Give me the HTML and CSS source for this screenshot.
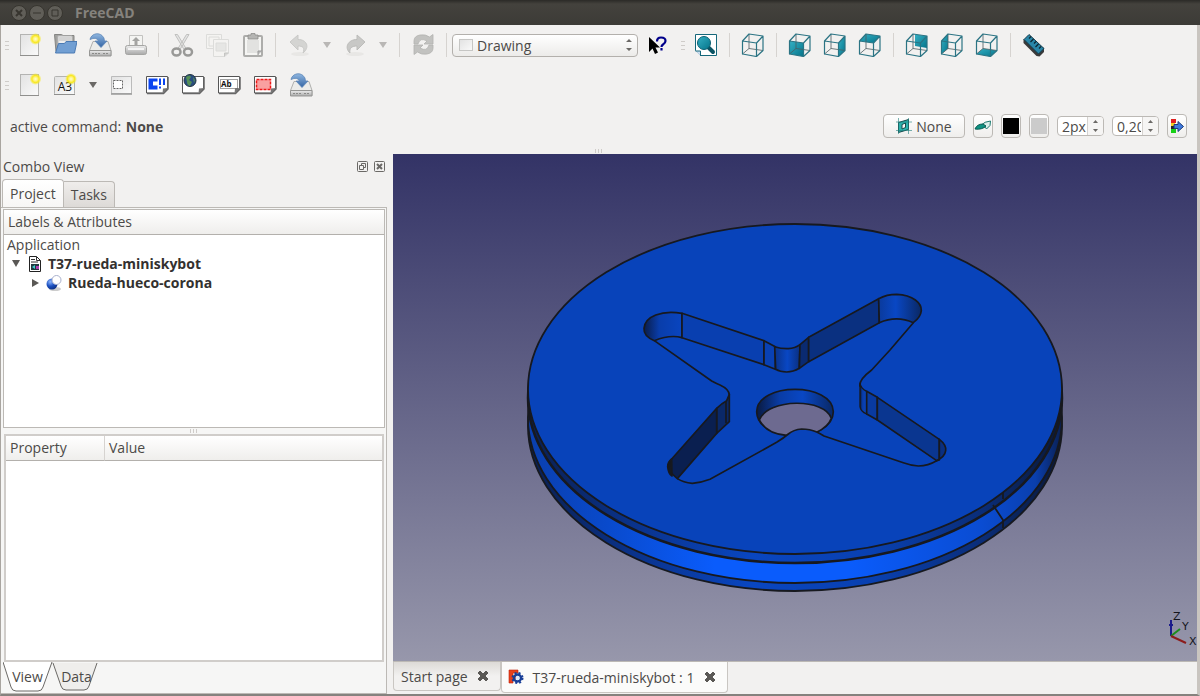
FILE: index.html
```
<!DOCTYPE html>
<html lang="en">

<head>
  <meta charset="UTF-8">
  <meta name="viewport" content="width=device-width, initial-scale=1.0">
  <title>FreeCAD</title>
  <link rel="stylesheet" href="styles.css">
</head>

<body>
  <!-- shared shapes -->
  <svg class="defs" width="0" height="0" aria-hidden="true">
    <defs>
      <linearGradient id="paper" x1="0" y1="0" x2="1" y2="1">
        <stop offset="0" stop-color="#e2e2e2" />
        <stop offset="1" stop-color="#fafafa" />
      </linearGradient>
      <linearGradient id="metal" x1="0" y1="0" x2="0" y2="1">
        <stop offset="0" stop-color="#eeeeee" />
        <stop offset="1" stop-color="#a8a8a8" />
      </linearGradient>
      <linearGradient id="blue" x1="0" y1="0" x2="0" y2="1">
        <stop offset="0" stop-color="#8fb6e0" />
        <stop offset="1" stop-color="#3465a4" />
      </linearGradient>
      <linearGradient id="teal" x1="0" y1="0" x2="1" y2="1">
        <stop offset="0" stop-color="#35b0c4" />
        <stop offset="1" stop-color="#04748a" />
      </linearGradient>
      <radialGradient id="glow">
        <stop offset="0" stop-color="#ffffd0" />
        <stop offset=".35" stop-color="#fff27a" />
        <stop offset=".6" stop-color="#f8e820" />
        <stop offset="1" stop-color="#f8e820" stop-opacity="0" />
      </radialGradient>
      <radialGradient id="ball" cx=".35" cy=".3" r=".8">
        <stop offset="0" stop-color="#8fb8ff" />
        <stop offset=".5" stop-color="#1c50c0" />
        <stop offset="1" stop-color="#0a2a78" />
      </radialGradient>
      <g id="new-file">
        <rect x="2.500" y="1.500" width="18" height="21" fill="url(#paper)" stroke="#b4b4b2" />
        <path d="M2 22.500h19" stroke="#8f8f8d" />
        <circle cx="17.500" cy="6" r="6" fill="url(#glow)" />
      </g>
      <g id="save">
        <path d="M5 8.500h15l3 9v5H1.500v-5z" fill="#ececea" stroke="#b0b0ae" />
        <path d="M1.500 17.500h21.500v5.500H1.500z" fill="url(#metal)" stroke="#979795" />
        <path d="M4 20.500h8M15 20.500h5" stroke="#8a8a88" stroke-dasharray="2 1" />
        <path d="M2 6.500C3 1 10-1 14 2.500q2.500 2 2.500 5.500H19l-6 6.500L7 8h3.500Q8.500 3.500 2 6.500z" fill="url(#blue)" stroke="#5d86b8" stroke-width=".8" />
      </g>
      <g id="cube" fill="none" stroke="#2b7484" stroke-width="1.200" stroke-linejoin="round">
        <path d="M8 1v14.500M8 15.500l14 2M8 15.500L1.500 21" stroke="#4c5c60" stroke-width=".8" />
        <path d="M1.500 8L8 1l14 2v14.500l-6.500 6L1.500 21zM1.500 8l14 2L22 3M15.500 10v13.500" />
      </g>
      <g id="sheet">
        <path d="M1.500 3.500h21v12l-5 4.500h-16z" fill="#fff" stroke="#555" stroke-linejoin="round" />
        <path d="M2 20.500h16.500l4.500-4.500V4" fill="none" stroke="#666" stroke-width="1.500" />
        <path d="M17.500 20.500l.5-5 5-.5z" fill="#777" />
      </g>
      <g id="cross">
        <path d="M2 4l2-2 3 3 3-3 2 2-3 3 3 3-2 2-3-3-3 3-2-2 3-3z" fill="#5a5855" stroke="#5a5855" stroke-linejoin="round" />
      </g>
    </defs>
  </svg>

  <div class="window">
    <header class="titlebar">
      <button class="wm" aria-label="Close"><svg width="16" height="16"><circle cx="8" cy="8" r="7.500" /><path d="M5 5l6 6M11 5l-6 6" stroke-width="2" /></svg></button>
      <button class="wm" aria-label="Minimize"><svg width="16" height="16"><circle cx="8" cy="8" r="7.500" /><path d="M4 8h8" /></svg></button>
      <button class="wm" aria-label="Maximize"><svg width="16" height="16"><circle cx="8" cy="8" r="7.500" /><path d="M5 5h6v6H5z" /></svg></button>
      <h1>FreeCAD</h1>
    </header>

    <nav class="toolbar" aria-label="Standard">
      <span class="grip"></span>
      <button class="tool" aria-label="New"><svg viewBox="0 0 24 24"><use href="#new-file" /></svg></button>
      <button class="tool" aria-label="Open">
        <svg viewBox="0 0 24 24">
          <path d="M1.500 1.500h7l1.500 1h11v16H3z" fill="#a2a2a0" stroke="#858583" />
          <path d="M5 3h14v9H5z" fill="#eee" stroke="#bbb" />
          <path d="M6 5h12M6 7h12" stroke="#aaa" stroke-width=".8" />
          <path d="M5.500 10.500h6l1.500-2h11L21.500 20H2.500z" fill="#729fd3" stroke="#4b7ab3" stroke-linejoin="round" />
        </svg>
      </button>
      <button class="tool" aria-label="Save"><svg viewBox="0 0 24 24"><use href="#save" /></svg></button>
      <button class="tool" aria-label="Print">
        <svg viewBox="0 0 24 24">
          <path d="M6.500 2.500h13V13h-13z" fill="#f4f4f2" stroke="#c2c2c0" />
          <path d="M13 4l4 4h-2.500v4h-3V8H9z" fill="#a4a4a2" />
          <rect x="2.500" y="12.500" width="21" height="9" rx="2" fill="url(#metal)" stroke="#a5a5a3" />
          <path d="M5 16h16" stroke="#f4f4f4" stroke-width="2" />
        </svg>
      </button>
      <span class="sep"></span>
      <button class="tool" aria-label="Cut">
        <svg viewBox="0 0 24 24" fill="none">
          <path d="M5 1.500l2.500 0 8.500 14-2 1zM19 1.500l-2.500 0-8.500 14 2 1z" fill="#e4e4e4" stroke="#c0c0be" />
          <ellipse cx="6.500" cy="19" rx="4" ry="3.500" stroke="#999997" stroke-width="2.500" />
          <ellipse cx="18" cy="19" rx="4" ry="3.500" stroke="#999997" stroke-width="2.500" />
        </svg>
      </button>
      <button class="tool" aria-label="Copy">
        <svg viewBox="0 0 24 24" fill="#f4f3f1" stroke="#dcdcda">
          <path d="M1.500 1.500h15v14h-15zM4 4h10v9H4z" />
          <path d="M8.500 6.500h15V20L20 23.500H8.500z" />
          <path d="M11 10h10v8H11z" fill="#e6e6e4" />
          <path d="M19.500 23.500V20h4" fill="#d4d4d2" stroke="#c4c4c2" />
        </svg>
      </button>
      <button class="tool" aria-label="Paste">
        <svg viewBox="0 0 24 24">
          <rect x="4" y="3" width="18" height="20" rx="1" fill="#f5f5f3" stroke="#adadab" stroke-width="2" />
          <path d="M7 7h12v13H7z" fill="#e2e2e0" />
          <path d="M8 2h3V.500h4V2h3v4H8z" fill="#b5b5b3" stroke="#8e8e8c" stroke-width=".8" />
          <path d="M18 22v-4h4" fill="#bbb" stroke="#999" />
        </svg>
      </button>
      <span class="sep"></span>
      <button class="tool" aria-label="Undo">
        <svg viewBox="0 0 24 24"><ellipse cx="13" cy="21" rx="9" ry="2" fill="#e8e7e5" /><path d="M3 9l8-7v4.500c9 0 12 8 5 13.500 2-5 0-7-5-7V17z" fill="#d4d4d2" stroke="#c9c9c7" /></svg>
      </button>
      <button class="drop" aria-label="Undo history"><svg viewBox="0 0 8 6"><path d="M0 0h8L4 6z" fill="#b9b7b5" /></svg></button>
      <button class="tool" aria-label="Redo">
        <svg viewBox="0 0 24 24"><ellipse cx="12" cy="21" rx="9" ry="2" fill="#e8e7e5" /><path d="M22 9l-8-7v4.500c-9 0-13 8-7 13.500-1-5 2-7 7-7V17z" fill="#c8c8c6" stroke="#bcbcba" /></svg>
      </button>
      <button class="drop" aria-label="Redo history"><svg viewBox="0 0 8 6"><path d="M0 0h8L4 6z" fill="#b9b7b5" /></svg></button>
      <span class="sep"></span>
      <button class="tool" aria-label="Refresh">
        <svg viewBox="0 0 24 24" fill="#c2c2c0" stroke="#b2b2b0" stroke-width=".8">
          <path d="M3 11V8q0-5 6-6 5.500-1 9.500 2L22 1.500V11h-9l3-3Q9 4 7 11z" />
          <path d="M22 12v3q0 5-6 6-5.500 1-9.500-2L3 21.500V12h9l-3 3q7 4 9-3z" />
        </svg>
      </button>
      <span class="sep"></span>
      <div class="workbench">
        <svg width="14" height="12"><rect x=".5" y=".5" width="13" height="11" fill="url(#paper)" stroke="#c6c6c4" /></svg>
        <select aria-label="Workbench">
          <option>Drawing</option>
        </select>
        <svg width="6" height="12" fill="#6b6966"><path d="M0 3l3-3 3 3zM0 9l3 3 3-3z" /></svg>
      </div>
      <button class="tool" aria-label="What's this">
        <svg viewBox="0 0 24 24">
          <path d="M5 4v15l3.500-3.500L11 21l3-1.500-2.500-5H16z" fill="#000" />
          <path d="M13 8.500q0-4 4-4 4.500 0 4.500 3.500 0 2-2.500 3.500-1.500 1-1.500 2.500M17.500 15v2.500" fill="none" stroke="#00008b" stroke-width="2.200" />
        </svg>
      </button>
      <span class="grip inner"></span>
      <button class="tool" aria-label="Fit all">
        <svg viewBox="0 0 24 24">
          <path d="M2 1.500h20.500v21H6.500l-5-5V1.500z" fill="#fff" stroke="#15677a" />
          <path d="M1.500 18h5v5" fill="#cde" stroke="#15677a" />
          <path d="M13 13l6 6" stroke="#0b5363" stroke-width="4" stroke-linecap="round" />
          <circle cx="10" cy="10" r="6.500" fill="url(#teal)" stroke="#0b6072" />
        </svg>
      </button>
      <span class="sep"></span>
      <button class="tool" aria-label="Axonometric"><svg viewBox="0 0 24 24"><use href="#cube" /></svg></button>
      <span class="sep"></span>
      <button class="tool" aria-label="Front"><svg viewBox="0 0 24 24"><path d="M1.500 8l14 2v13.500L1.500 21z" fill="url(#teal)" /><use href="#cube" /></svg></button>
      <button class="tool" aria-label="Right"><svg viewBox="0 0 24 24"><path d="M15.500 10L22 3v14.500l-6.500 6z" fill="url(#teal)" /><use href="#cube" /></svg></button>
      <button class="tool" aria-label="Top"><svg viewBox="0 0 24 24"><path d="M1.500 8L8 1l14 2-6.500 7z" fill="url(#teal)" /><use href="#cube" /></svg></button>
      <span class="sep"></span>
      <button class="tool" aria-label="Rear"><svg viewBox="0 0 24 24"><path d="M10 1.500L22 3v12l-12-2z" fill="url(#teal)" /><use href="#cube" /></svg></button>
      <button class="tool" aria-label="Left"><svg viewBox="0 0 24 24"><path d="M1.500 8L8 1v14.500L1.500 21z" fill="url(#teal)" /><use href="#cube" /></svg></button>
      <button class="tool" aria-label="Bottom"><svg viewBox="0 0 24 24"><path d="M1.500 21L8 15.500l14 2-6.500 6z" fill="url(#teal)" /><use href="#cube" /></svg></button>
      <span class="sep"></span>
      <button class="tool" aria-label="Measure">
        <svg viewBox="0 0 24 24">
          <path d="M1.500 6v4l13 13 3 .5 4.500-4.500v-4z" fill="#3a3a3a" />
          <path d="M2 6.500L7 1.500l15 14-5.500 5.500z" fill="#2a86a8" stroke="#163c4c" stroke-linejoin="round" />
          <path d="M9 3.500l-2 2M11.500 6l-3 3M14 8.500l-2 2M16.500 11l-3 3M19 13.500l-2 2" stroke="#0c2630" stroke-width="1.200" />
        </svg>
      </button>
    </nav>

    <nav class="toolbar" aria-label="Drawing">
      <span class="grip"></span>
      <button class="tool" aria-label="New drawing"><svg viewBox="0 0 24 24"><use href="#new-file" /></svg></button>
      <button class="tool" aria-label="New A3 page">
        <svg viewBox="0 0 24 24">
          <rect x="1.500" y="3.500" width="20" height="18" rx="1" fill="url(#paper)" stroke="#b4b4b2" />
          <path d="M1 21.500h21" stroke="#8f8f8d" />
          <text x="12" y="18" text-anchor="middle" class="icon-a3">A3</text>
          <circle cx="18" cy="6" r="6" fill="url(#glow)" />
        </svg>
      </button>
      <button class="drop" aria-label="Page sizes"><svg viewBox="0 0 8 6"><path d="M0 0h8L4 6z" fill="#6b6966" /></svg></button>
      <div class="tool-group">
        <button class="tool" aria-label="Insert view">
          <svg viewBox="0 0 24 24">
            <path d="M2.500 3.500h20v17h-20z" fill="url(#paper)" stroke="#bbb" />
            <path d="M2 21h21" stroke="#999" stroke-width="1.500" />
            <path d="M4.500 7.500h9v8h-9z" fill="#fff" stroke="#666" stroke-dasharray="2 1" />
          </svg>
        </button>
        <button class="tool" aria-label="Ortho views">
          <svg viewBox="0 0 24 24"><use href="#sheet" />
            <path d="M3.500 5.500h9v3H8v4h4.500v4h-9zM14 5.500h2V12h-2zM18 5.500h2V12h-2zM14 13.500h2v2h-2z" fill="#0a44f0" />
          </svg>
        </button>
        <button class="tool" aria-label="Open browser view">
          <svg viewBox="0 0 24 24"><use href="#sheet" />
            <circle cx="9" cy="7.500" r="6" fill="#294d80" stroke="#22343d" />
            <path d="M5 4q4-3 5 0l-2 3 3 2-2 4q-3-1-3-4zM12 4l2 3-1 3z" fill="#559056" />
          </svg>
        </button>
        <button class="tool" aria-label="Annotation">
          <svg viewBox="0 0 24 24"><use href="#sheet" />
            <path d="M3.500 6.500h17v9h-17z" fill="none" stroke="#444" stroke-dasharray="1 1" />
            <text x="4" y="14" class="icon-ab">Ab</text>
          </svg>
        </button>
        <button class="tool" aria-label="Clip">
          <svg viewBox="0 0 24 24"><use href="#sheet" />
            <path d="M3.500 6.500h14v10h-14z" fill="#f9a0a0" stroke="#ee1818" stroke-width="1.500" stroke-dasharray="3 1" />
          </svg>
        </button>
        <button class="tool" aria-label="Export page"><svg viewBox="0 0 24 24"><use href="#save" /></svg></button>
      </div>
    </nav>

    <div class="toolbar draft">
      <p>active command: <strong>None</strong></p>
      <div class="draft-controls">
        <button class="box plane">
          <svg width="16" height="16" viewBox="0 0 16 16">
            <path d="M2.500 4.500l10-3v10l-10 3zM6 6.500v4.500l3.500-1.500V5z" fill="#2cb3ad" fill-rule="evenodd" stroke="#17494a" />
            <path d="M0 4h16M0 12.500h16M2.500 0v16M12.500 0v16" stroke="#207d7a" stroke-width=".6" />
          </svg>
          None
        </button>
        <button class="box" aria-label="Construction mode">
          <svg width="18" height="14" viewBox="0 0 18 14">
            <path d="M6 7q5-5 10.500-5 1 5-4 8-1-3-4-2z" fill="#d9eeea" stroke="#1e7b71" />
            <path d="M1 10q2-5 8-5l3 2q-4 4-11 3z" fill="#0d9383" stroke="#0b5c53" />
          </svg>
        </button>
        <button class="box" aria-label="Line color"><span class="swatch black"></span></button>
        <button class="box" aria-label="Face color"><span class="swatch grey"></span></button>
        <div class="spin">
          <input type="text" value="2px" aria-label="Line width">
          <div class="arrows">
            <button aria-label="Increase line width"><svg width="5" height="3"><path d="M0 3l2.500-3L5 3z" /></svg></button>
            <button aria-label="Decrease line width"><svg width="5" height="3"><path d="M0 0l2.500 3L5 0z" /></svg></button>
          </div>
        </div>
        <div class="spin">
          <input type="text" value="0,20" aria-label="Font size">
          <div class="arrows">
            <button aria-label="Increase font size"><svg width="5" height="3"><path d="M0 3l2.500-3L5 3z" /></svg></button>
            <button aria-label="Decrease font size"><svg width="5" height="3"><path d="M0 0l2.500 3L5 0z" /></svg></button>
          </div>
        </div>
        <button class="box" aria-label="Apply to selected">
          <svg width="14" height="16" viewBox="0 0 14 16">
            <path d="M1 1h5v4H1z" fill="#e02020" /><path d="M1 5h4v3H1z" fill="#f5d020" /><path d="M1 8h4v3H1z" fill="#222" /><path d="M1 11h5v4H1z" fill="#18d018" />
            <path d="M4 6.500h4v-3l5.500 5L8 13.500v-3H4z" fill="#3f7ade" stroke="#1c3b78" />
          </svg>
        </button>
      </div>
    </div>
    <div class="hgrip"><span></span></div>

    <main class="main">
      <aside class="combo">
        <div class="dock-title">
          <h2>Combo View</h2>
          <button aria-label="Float"><svg width="11" height="11"><rect x=".5" y=".5" width="10" height="10" rx="1" /><path d="M4.500 4.500v-2h4v4h-2M2.500 4.500h4v4h-4z" /></svg></button>
          <button aria-label="Close panel"><svg width="11" height="11"><rect x=".5" y=".5" width="10" height="10" rx="1" /><path d="M3 3l5 5M8 3l-5 5" stroke-width="2" /></svg></button>
        </div>
        <div class="tabs">
          <button class="tab active">Project</button>
          <button class="tab">Tasks</button>
        </div>
        <div class="pane">
          <section class="frame tree">
            <h3>Labels &amp; Attributes</h3>
            <ul>
              <li>Application</li>
              <li class="doc">
                <svg width="8" height="8"><path d="M0 0h8L4 7z" fill="#5a5855" /></svg>
                <svg class="doc-icon" width="12" height="16">
                  <path d="M.5.500h7l4 4v11H.5z" fill="#fff" stroke="#222" />
                  <path d="M7.500.500v4h4M2 3.500h4M2 6h7" fill="none" stroke="#333" />
                  <path d="M2 8h8v6H2z" fill="#223a40" /><path d="M3 11l3-2v4z" fill="#40d0d0" /><path d="M7 10h3v3H7z" fill="#b040b0" />
                </svg>
                <strong>T37-rueda-miniskybot</strong>
              </li>
              <li class="part">
                <svg width="7" height="8"><path d="M0 0l7 4-7 4z" fill="#5a5855" /></svg>
                <svg class="part-icon" width="16" height="16">
                  <ellipse cx="9" cy="14" rx="6" ry="2" fill="#ccc" />
                  <circle cx="6" cy="9" r="5.500" fill="url(#ball)" />
                  <circle cx="10.500" cy="5" r="4.500" fill="#fff" stroke="#a9b0cc" />
                </svg>
                <strong>Rueda-hueco-corona</strong>
              </li>
            </ul>
          </section>
          <div class="vgrip"><span></span></div>
          <section class="frame props">
            <table>
              <thead>
                <tr>
                  <th class="name">Property</th>
                  <th>Value</th>
                </tr>
              </thead>
            </table>
          </section>
          <div class="sheet-tabs">
            <button class="sheet-tab"><svg viewBox="0 0 50 30"><path d="M0 0l8 25q1 4 5 4h22q4 0 5-4L49 0" fill="#fff" stroke="#6b6966" /></svg><span>View</span></button>
            <button class="sheet-tab"><svg viewBox="0 0 50 30"><path d="M1 1l8 23q1 4 5 4h18q4 0 5-4l8-23" fill="#efeeec" stroke="#6b6966" /></svg><span>Data</span></button>
          </div>
        </div>
      </aside>

      <section class="mdi">
        <div class="view3d">
          <svg class="wheel" viewBox="393 154 804 507" role="img" aria-label="Wheel">
            <defs>
              <linearGradient id="rim" x1="0" x2="1">
                <stop offset="0" stop-color="#0a1f50" />
                <stop offset=".2" stop-color="#0a338c" />
                <stop offset=".42" stop-color="#0946c0" />
                <stop offset=".65" stop-color="#0940b0" />
                <stop offset=".85" stop-color="#0a2d78" />
                <stop offset="1" stop-color="#0a1838" />
              </linearGradient>
              <linearGradient id="groove" x1="0" x2="1">
                <stop offset="0" stop-color="#0a3fae" />
                <stop offset=".15" stop-color="#094acc" />
                <stop offset=".35" stop-color="#0a5cfc" />
                <stop offset=".6" stop-color="#0a5cfc" />
                <stop offset=".85" stop-color="#0a4cd2" />
                <stop offset=".95" stop-color="#0a3fae" />
                <stop offset="1" stop-color="#0a1f50" />
              </linearGradient>
              <linearGradient id="wall-l" x1="0" x2="1">
                <stop offset="0" stop-color="#0a1c48" />
                <stop offset=".4" stop-color="#093daa" />
                <stop offset="1" stop-color="#0945c0" />
              </linearGradient>
              <linearGradient id="wall-c" x1="0" x2="1">
                <stop offset="0" stop-color="#0a3288" />
                <stop offset=".5" stop-color="#0947c4" />
                <stop offset="1" stop-color="#0a2f80" />
              </linearGradient>
              <linearGradient id="wall-r" x1="0" x2="1">
                <stop offset="0" stop-color="#0a3a9c" />
                <stop offset=".4" stop-color="#0947c4" />
                <stop offset="1" stop-color="#0a2864" />
              </linearGradient>
              <linearGradient id="wall-h" x1="0" x2="1">
                <stop offset="0" stop-color="#0a1a40" />
                <stop offset=".3" stop-color="#093ca6" />
                <stop offset=".6" stop-color="#0947c4" />
                <stop offset="1" stop-color="#0a2864" />
              </linearGradient>
            </defs>
            <g stroke="#17191f" stroke-width="1.800">
              <ellipse cx="795" cy="426" rx="267" ry="165" fill="url(#rim)" />
              <ellipse cx="795" cy="418" rx="267" ry="165" fill="url(#groove)" />
              <ellipse cx="795" cy="398" rx="267" ry="165" fill="url(#rim)" stroke-width="2.500" />
              <ellipse cx="795" cy="389" rx="267" ry="165" fill="#0843ba" />
              <path d="M1003 492v7M993 505l10 15v8" fill="none" />
            </g>
            <!-- star pocket -->
            <svg x="620" y="280" width="340" height="220" viewBox="0 0 1020 660">
              <g stroke="#17191f" stroke-width="5" stroke-linejoin="round">
                <path d="M410 395C412 306 638 306 640 395C638 490 412 490 410 395z" fill="url(#wall-h)" />
                <path d="M418 420C445 354 615 354 634 415Q625 440 590 457Q545 475 500 466Q440 462 418 420z" fill="#6d6a90" />
                <path d="M490 476L505 462Q520 449 545 447Q570 447 590 456L612 468V480H490z" fill="#0843ba" stroke="none" />
                <path d="M72 145C75 108 125 90 186 100V173Q150 163 103 182Q70 168 72 145z" fill="url(#wall-l)" />
                <path d="M186 100L432 182V254L186 173z" fill="#093fb0" />
                <path d="M432 182L466 200V268L432 254z" fill="#0941b4" />
                <path d="M464 200Q485 207 505 206Q525 205 540 194L538 265Q520 276 500 276Q480 276 467 268z" fill="url(#wall-c)" />
                <path d="M540 194L566 172V245L538 265z" fill="#0a2a70" />
                <path d="M566 172L776 56L778 128L566 245z" fill="#0a3080" />
                <path d="M776 56Q800 43 830 43C880 45 905 70 904 92Q902 112 880 128Q830 105 778 128z" fill="url(#wall-r)" />
                <path d="M720 310Q722 325 740 334V402Q722 395 720 380z" fill="url(#wall-l)" stroke-width="4" />
                <path d="M740 334L772 352V420L740 402z" fill="#093aa0" />
                <path d="M772 352L958 478V540L950 542L772 420z" fill="#0a3690" />
                <path d="M958 478Q980 495 977 512Q975 530 950 542L958 538z" fill="#0a2f80" />
                <path d="M328 343V425L290 460V385Q305 370 320 362z" fill="#0a2868" />
                <path d="M318 364V430" fill="none" />
                <path d="M290 385L155 537Q130 562 172 596L290 460z" fill="#0a1f50" />
                <path d="M155 537Q142 548 143 560Q145 582 156 588z" fill="#17191f" />
                <path d="M103 182L275 303Q290 311 300 315Q328 328 328 345M880 128L810 210L755 270Q715 300 720 320M950 542Q925 557 895 558Q875 557 850 548L612 468Q600 460 590 456Q570 447 545 447Q520 449 505 462Q490 475 470 487L270 598Q245 608 217 610Q190 608 172 596" fill="none" />
              </g>
            </svg>
            <g class="axes" fill="none" stroke-width="2">
              <path d="M1171 636v-16M1169 625h4" stroke="#1c1c8c" />
              <path d="M1171 636l9-7" stroke="#1c8c1c" />
              <path d="M1171 636l15 7" stroke="#8c1c1c" />
              <text x="1173" y="620">Z</text>
              <text x="1182" y="630">Y</text>
              <text x="1189" y="645">X</text>
            </g>
          </svg>
        </div>
        <div class="doc-tabs">
          <div class="doc-tab">
            <button>Start page</button>
            <button aria-label="Close Start page"><svg width="14" height="14"><use href="#cross" /></svg></button>
          </div>
          <div class="doc-tab active">
            <svg width="16" height="16">
              <path d="M1 1h9v3H5v3h3v3H5v4H1z" fill="#e8401c" stroke="#c02008" stroke-width=".6" />
              <circle cx="9.500" cy="9" r="3.500" fill="none" stroke="#193f98" stroke-width="2.500" />
              <circle cx="9.500" cy="9" r="5" fill="none" stroke="#193f98" stroke-width="2" stroke-dasharray="2 2" />
              <circle cx="9.500" cy="9" r="2" fill="#dfe8fa" />
            </svg>
            <button>T37-rueda-miniskybot : 1</button>
            <button aria-label="Close T37-rueda-miniskybot"><svg width="14" height="14"><use href="#cross" /></svg></button>
          </div>
        </div>
      </section>
    </main>
  </div>
</body>

</html>
```

FILE: styles.css
```
* {
  margin: 0;
  padding: 0;
  box-sizing: border-box;
}

html,
body {
  width: 100%;
  height: 100%;
}

body {
  background: #85827e;
  color: #4c4a48;
  font: 14px/19px "Open Sans", "Noto Sans", sans-serif;
  overflow: hidden;
}

button,
input,
select {
  border: 0;
  background: none;
  color: inherit;
  font: inherit;
}

svg {
  display: block;
  flex: none;
}

.defs {
  position: absolute;
}

.window {
  display: flex;
  flex-direction: column;
  height: 100vh;
  background: #f2f1f0;
  border-left: 1px solid #a9a5a0;
  border-right: 3px solid #c9c5c0;
  border-bottom: 2px solid #85827e;
}

/* title bar */
.titlebar {
  display: flex;
  align-items: center;
  gap: 2px;
  height: 25px;
  padding-left: 11px;
  margin: 0 -3px 0 -1px;
  background: linear-gradient(#2b2a27, #44423d 4px, #3c3b37);
  color: #85827d;
}

.titlebar h1 {
  margin-left: 10px;
  font-size: 14px;
}

.wm svg {
  fill: #605e58;
  stroke: #37352f;
}

/* tool bars */
.toolbar {
  display: flex;
  align-items: center;
  height: 40px;
}

.tool {
  display: flex;
  justify-content: center;
  width: 35px;
}

.tool svg {
  width: 24px;
  height: 24px;
}

.tool-group {
  display: flex;
  gap: 1px;
}

.drop {
  display: flex;
  justify-content: center;
  width: 21px;
}

.drop svg {
  width: 8px;
  height: 6px;
}

.grip {
  width: 11px;
  height: 9px;
  border-left: 4px solid #f2f1f0;
  border-right: 3px solid #f2f1f0;
  background: repeating-linear-gradient(#cfccc9 0 1px, #f2f1f0 1px 4px);
}

.grip.inner {
  width: 15px;
  border-left-width: 8px;
}

.sep {
  width: 12px;
  height: 24px;
  background: linear-gradient(#d6d3d0, #d6d3d0) center / 1px 100% no-repeat;
}

.workbench {
  display: flex;
  align-items: center;
  gap: 4px;
  width: 186px;
  height: 23px;
  padding: 0 5px 0 6px;
  border: 1px solid #b3b0ac;
  border-radius: 4px;
  background: linear-gradient(#fff, #ecebe9);
}

.workbench select {
  flex: 1;
  appearance: none;
}

.icon-a3 {
  font: 12px "Open Sans", sans-serif;
  fill: #111;
}

.icon-ab {
  font: bold 8px "Open Sans", sans-serif;
  fill: #111;
}

/* draft bar */
.draft {
  justify-content: space-between;
  height: 42px;
  padding: 0 10px 0 9px;
}

.draft strong {
  margin-left: 1px;
}

.draft-controls {
  display: flex;
  align-items: center;
  gap: 8px;
}

.box {
  display: flex;
  align-items: center;
  justify-content: center;
  width: 20px;
  height: 24px;
  border: 1px solid #bcb9b5;
  border-radius: 4px;
  background: linear-gradient(#fff, #efeeec);
}

.box.plane {
  gap: 4px;
  width: 82px;
}

.swatch {
  width: 16px;
  height: 16px;
}

.swatch.black {
  background: #000;
}

.swatch.grey {
  background: #cbcbcb;
}

.spin {
  display: flex;
  width: 47px;
  height: 20px;
  border: 1px solid #bcb9b5;
  border-radius: 4px;
  background: #fff;
  overflow: hidden;
}

.spin input {
  width: 28px;
  padding-left: 4px;
}

.arrows {
  display: flex;
  flex: 1;
  flex-direction: column;
  border-left: 1px solid #d5d2cf;
  margin-left: 1px;
  background: #f6f5f4;
}

.arrows button {
  display: flex;
  flex: 1;
  align-items: center;
  justify-content: center;
  fill: #6b6966;
}

.hgrip {
  display: flex;
  align-items: flex-end;
  justify-content: center;
  height: 7px;
  padding-bottom: 1px;
}

.hgrip span,
.vgrip span {
  width: 8px;
  height: 4px;
  background: repeating-linear-gradient(90deg, #cfccc9 0 1px, transparent 1px 3px);
}

/* dock */
.main {
  display: flex;
  flex: 1;
  min-height: 0;
}

.combo {
  display: flex;
  flex-direction: column;
  width: 392px;
  padding-right: 6px;
}

.dock-title {
  display: flex;
  align-items: center;
  gap: 6px;
  height: 25px;
  padding: 0 2px;
}

.dock-title h2 {
  flex: 1;
  font-size: 14px;
  font-weight: normal;
}

.dock-title svg {
  fill: none;
  stroke: #6b6966;
}

.tabs {
  display: flex;
  align-items: flex-end;
  height: 28px;
  padding-left: 1px;
}

.tab {
  height: 26px;
  padding: 0 7px;
  border: 1px solid #bcb9b5;
  border-left: 0;
  border-bottom: 0;
  border-radius: 0 4px 0 0;
  background: linear-gradient(#efedeb, #dddad7);
}

.tab.active {
  height: 28px;
  border-left: 1px solid #bcb9b5;
  border-radius: 4px 4px 0 0;
  background: linear-gradient(#fff, #f7f6f5);
}

.pane {
  display: flex;
  flex: 1;
  flex-direction: column;
  min-height: 0;
  padding: 1px 1px 0 2px;
  border-top: 1px solid #bcb9b5;
  border-right: 1px solid #bcb9b5;
  border-bottom: 1px solid #bcb9b5;
  background: #f6f6f5;
}

.frame {
  min-height: 0;
  border: 1px solid #bcb9b5;
  background: #fff;
}

.tree {
  flex: 220;
}

.props {
  flex: 227;
  margin: 0 1px;
  border-width: 2px;
  border-color: #d0cdca;
}

.frame h3,
.frame th {
  height: 25px;
  padding-left: 4px;
  border-bottom: 1px solid #b3b0ac;
  background: linear-gradient(#fff, #efeeec);
  font-size: 14px;
  font-weight: normal;
  line-height: 24px;
  text-align: left;
}

.frame ul {
  list-style: none;
}

.frame li {
  display: flex;
  align-items: center;
  height: 19px;
  padding-left: 3px;
}

.frame li strong {
  color: #33312f;
}

.frame li.doc {
  padding-left: 8px;
}

.frame li.part {
  padding-left: 28px;
}

.doc-icon {
  margin: 0 7px 0 9px;
}

.part-icon {
  margin: 0 6px 0 7px;
}

.frame table {
  width: 100%;
  border-collapse: separate;
  border-spacing: 0;
}

.frame th.name {
  width: 99px;
  border-right: 1px solid #d6d3d0;
}

.vgrip {
  display: flex;
  align-items: center;
  justify-content: center;
  height: 6px;
}

.sheet-tabs {
  display: flex;
  height: 31px;
}

.sheet-tab {
  position: relative;
  width: 49px;
  height: 28px;
}

.sheet-tab svg {
  position: absolute;
  top: 0;
  left: 0;
  width: 50px;
  height: 30px;
}

.sheet-tab span {
  position: relative;
}

/* documents */
.mdi {
  display: flex;
  flex: 1;
  flex-direction: column;
  min-width: 0;
}

.view3d {
  flex: 1;
  min-height: 0;
  background: linear-gradient(#333366, #9797ab);
}

.wheel {
  width: 100%;
  height: 100%;
}

.axes text {
  fill: #15151c;
  stroke: none;
  font: 11px "DejaVu Sans", sans-serif;
}

.doc-tabs {
  display: flex;
  align-items: flex-start;
  height: 33px;
  border-top: 1px solid #bcb9b5;
}

.doc-tab {
  display: flex;
  align-items: center;
  gap: 8px;
  height: 29px;
  padding: 0 10px 0 7px;
  border: 1px solid #c9c6c2;
  border-top: 0;
  border-radius: 0 0 4px 4px;
  background: linear-gradient(#dddad7, #f2f1f0 14px);
}

.doc-tab.active {
  height: 31px;
  gap: 9px;
  padding-left: 6px;
  background: #fbfbfa;
}
```
